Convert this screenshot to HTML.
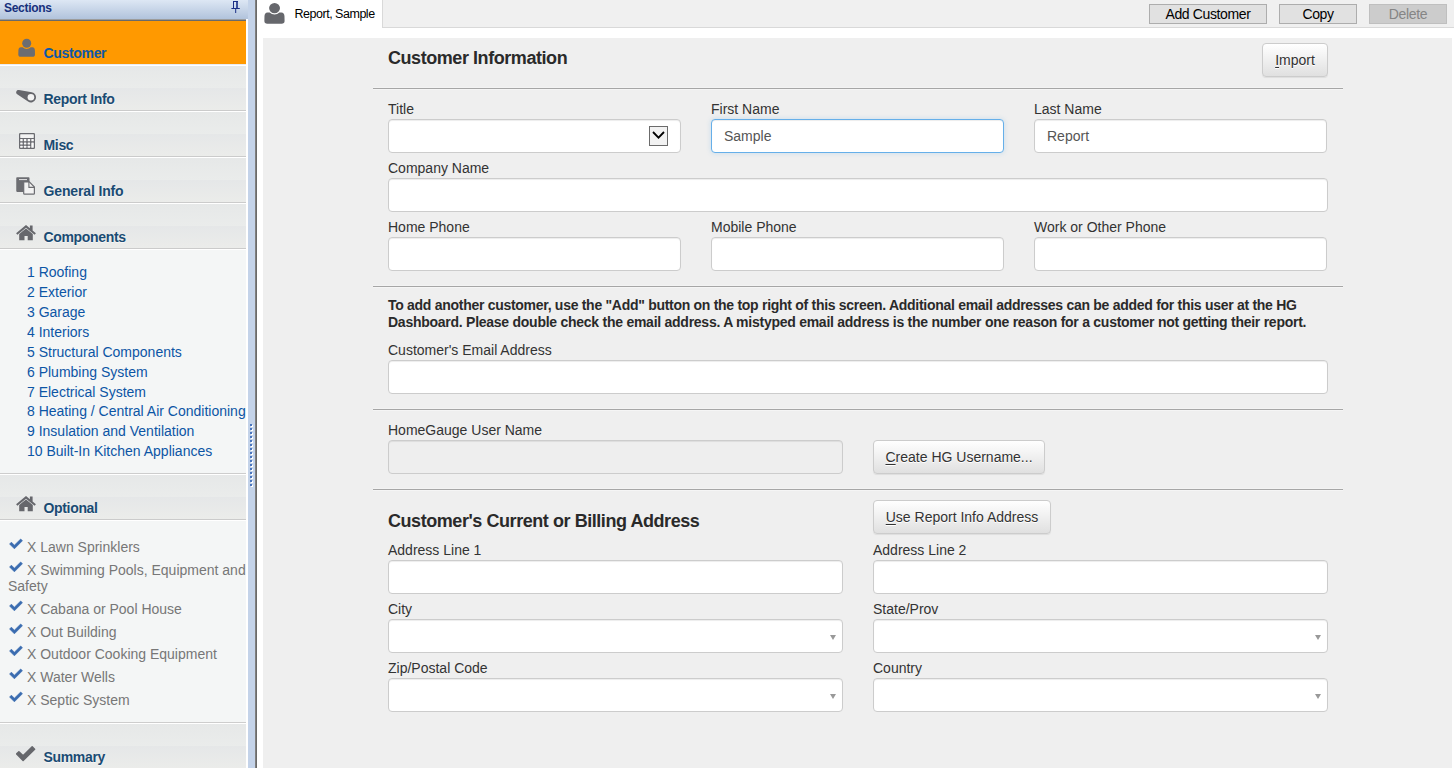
<!DOCTYPE html>
<html lang="en">
<head>
<meta charset="utf-8">
<title>Customer Information</title>
<style>
html,body{margin:0;padding:0}
body{width:1454px;height:768px;overflow:hidden;background:#fff;position:relative;font-family:"Liberation Sans",Arial,sans-serif;font-size:14px;color:#333}
.abs{position:absolute}
/* ---------- sidebar ---------- */
#side{position:absolute;left:0;top:0;width:248px;height:768px;overflow:hidden;background:linear-gradient(90deg,#f4f6f6 246px,#fff 246px)}
#shead{position:absolute;left:0;top:0;width:248px;height:19px;background:linear-gradient(#dde7f4,#b1c3dc);}
#shead .t{position:absolute;left:4px;top:1px;font-weight:bold;font-size:12px;line-height:15px;color:#16307c;letter-spacing:-0.3px}
#sline1{position:absolute;left:0;top:19px;width:246px;height:1px;background:#9c9c9c}
#sline2{position:absolute;left:0;top:20px;width:246px;height:1px;background:#6a6a6a}
.item{position:absolute;left:0;width:246px;height:44px;border-bottom:1px solid #cbcbcb;
 background:linear-gradient(#e6e8e8 0,#eaeceb 50%,#e5e7e8 50%,#ebecea 100%);}
.item .lbl{position:absolute;left:43.5px;font-weight:bold;font-size:14px;letter-spacing:-0.33px;line-height:16px;color:#1a4b73;white-space:nowrap;text-shadow:0 1px 0 #f6f6f6}
.item.sel{background:#ff9900;border-bottom-color:#e9ebf2}
.item.sel .lbl{color:#0e58a6;text-shadow:none}
.item svg{position:absolute}
.white1{position:absolute;left:0;width:246px;height:1px;background:#fff}
.comp{position:absolute;left:27px;font-size:14px;line-height:20px;color:#0c55a5;white-space:nowrap}
.opt{position:absolute;left:8px;font-size:14px;line-height:16px;color:#777;white-space:nowrap}
.opt svg{position:absolute;left:1px;top:-1px}
.opt span{padding-left:19px}
/* splitter */
#split{position:absolute;left:248px;top:0;width:7px;height:768px;background:#c4d3e9}
#splitd{position:absolute;left:255px;top:0;width:2px;height:768px;background:linear-gradient(90deg,#8a8a8a,#5f5f5f)}
/* ---------- main ---------- */
#topbar{position:absolute;left:382px;top:0;width:1072px;height:27px;background:#f0f0f0;border-bottom:1px solid #d9d9d9;border-left:1px solid #d9d9d9}
#tab{position:absolute;left:257px;top:0;width:125px;height:28px;background:#fff}
#tab .t{position:absolute;left:37.500px;top:7px;font-size:12.5px;letter-spacing:-0.48px;line-height:15px;color:#000;white-space:nowrap}
.wbtn{position:absolute;top:4px;height:18px;border:1px solid #adadad;background:#e1e1e1;color:#000;font-size:14px;letter-spacing:-0.36px;line-height:19px;text-align:center}
.wbtn.dis{background:#cccccc;border-color:#bfbfbf;color:#858585}
#panel{position:absolute;left:263px;top:38px;width:1189px;height:730px;background:#efefef}
.hr{position:absolute;left:373px;width:970px;height:1px;background:#a6a6a6;border-bottom:1px solid #f5f5f5;border-top:1px solid #f3f3f3;margin-top:-1px}
h1,h2{margin:0}
.h{position:absolute;left:388px;font-size:18px;letter-spacing:-0.44px;font-weight:bold;line-height:20px;color:#2a2a2a;white-space:nowrap}
.l{position:absolute;font-size:14px;line-height:20px;color:#333;white-space:nowrap}
.in{position:absolute;box-sizing:border-box;height:34px;border:1px solid #ccc;border-radius:4px;background:#fff;box-shadow:inset 0 1px 1px rgba(0,0,0,.075);font-size:14px;line-height:32px;color:#555;padding-left:12px}
.in.focus{border-color:#66afe9;box-shadow:inset 0 1px 1px rgba(0,0,0,.075),0 0 5px rgba(102,175,233,.3)}
.in.dis{background:#eeeeee}
.btn{position:absolute;box-sizing:border-box;height:34px;border:1px solid #ccc;border-radius:4px;background:linear-gradient(#fff,#e0e0e0);font-size:14px;line-height:32px;color:#333;text-align:center;text-shadow:0 1px 0 #fff;box-shadow:inset 0 1px 0 rgba(255,255,255,.15),0 1px 1px rgba(0,0,0,.075);white-space:nowrap}
.btn u{text-decoration:underline;text-underline-offset:2px}
.tri{position:absolute;width:0;height:0;border-left:3.5px solid transparent;border-right:3.5px solid transparent;border-top:5px solid #999}
.note{position:absolute;left:388px;top:297px;width:960px;font-size:14px;letter-spacing:-0.285px;font-weight:bold;line-height:17px;color:#2a2a2a}
</style>
</head>
<body>

<!-- ================= SIDEBAR ================= -->
<div id="side">
  <div id="shead"><div class="t">Sections</div></div>
  <div id="sline1"></div><div id="sline2"></div>

  <div class="item sel" style="top:21px;height:43px">
    <svg style="left:18px;top:17px" width="18" height="19" viewBox="0 0 18 19"><circle cx="8.7" cy="5.300" r="4.500" fill="#6c6d72"/><path d="M2.900 9.200H4.680A5.600 5.600 0 0 0 12.720 9.200H14.400C16 9.200 16.700 10.300 16.900 12.200L17 16.400C17 17.900 16.100 18.800 14.600 18.800H2.700C1.200 18.800.3 17.900.3 16.400L.4 12.200C.6 10.300 1.300 9.200 2.900 9.200z" fill="#6c6d72"/></svg>
    <div class="lbl" style="top:24px">Customer</div>
  </div>
  <div class="white1" style="top:65px"></div>

  <div class="item" style="top:66px">
    <svg style="left:16px;top:23px" width="21" height="15" viewBox="0 0 21 15"><path d="M2.890 1.030L15.770 3.280A5.100 5.100 0 1 1 12.040 12.530L1.210 5.210A2.300 2.300 0 0 1 2.890 1.030z" fill="#66676c"/><circle cx="14.900" cy="8.300" r="3.300" fill="#f3f3f3"/></svg>
    <div class="lbl" style="top:25px">Report Info</div>
  </div>
  <div class="white1" style="top:111px"></div>

  <div class="item" style="top:112px">
    <svg style="left:19px;top:21px" width="16" height="16" viewBox="0 0 16 16"><rect x="0" y="0" width="16" height="16" rx="1.200" fill="#6a6b70"/><rect x="1.200" y="1.300" width="13.600" height="3.600" rx=".4" fill="#f3f3f3"/><g fill="#fafafa"><rect x="1.200" y="6.100" width="2.500" height="2.100" rx=".5"/><rect x="4.900" y="6.100" width="2.500" height="2.100" rx=".5"/><rect x="8.600" y="6.100" width="2.500" height="2.100" rx=".5"/><rect x="12.300" y="6.100" width="2.500" height="2.100" rx=".5"/><rect x="1.200" y="9.400" width="2.500" height="2.100" rx=".5"/><rect x="4.900" y="9.400" width="2.500" height="2.100" rx=".5"/><rect x="8.600" y="9.400" width="2.500" height="2.100" rx=".5"/><rect x="1.200" y="12.700" width="2.500" height="2.100" rx=".5"/><rect x="4.900" y="12.700" width="2.500" height="2.100" rx=".5"/><rect x="8.600" y="12.700" width="2.500" height="2.100" rx=".5"/><rect x="12.300" y="9.400" width="2.500" height="5.400" rx=".6"/></g></svg>
    <div class="lbl" style="top:25px">Misc</div>
  </div>
  <div class="white1" style="top:157px"></div>

  <div class="item" style="top:158px">
    <svg style="left:16px;top:19px" width="20" height="18" viewBox="0 0 20 18"><path d="M.25 1c0-.5.3-.8.800-.8h11.650c.5 0 .8.300.8.800v13.100c0 .5-.3.800-.8.800H1.050c-.5 0-.8-.3-.8-.8z" fill="#6c6d72"/><path d="M3 2.600h8" stroke="#e6e6e6" stroke-width="1"/><path d="M7.700 4.900H13.300L18.400 10V16.400Q18.400 17.200 17.600 17.200H8.500Q7.700 17.200 7.700 16.400z" fill="#f2f2f2" stroke="#6c6d72" stroke-width="1.200"/><path d="M12.900 4.900V10.400H18.400" fill="none" stroke="#6c6d72" stroke-width="1.100"/></svg>
    <div class="lbl" style="top:25px;letter-spacing:-0.14px">General Info</div>
  </div>
  <div class="white1" style="top:203px"></div>

  <div class="item" style="top:204px">
    <svg style="left:16px;top:21px" width="20" height="16" viewBox="0 0 20 16"><path d="M10 0L.1 8.200l1.300 1.500L10 2.700l8.600 7 1.300-1.500-3.300-2.700V.4h-2.700v2.800z" fill="#66676c"/><path d="M10 3.500L3.200 9.100v6.200h5.300v-4.400h3.200v4.400h5.100V9.100z" fill="#66676c"/></svg>
    <div class="lbl" style="top:25px">Components</div>
  </div>
  <div class="white1" style="top:249px"></div>

  <div class="comp" style="top:262px">1 Roofing</div>
  <div class="comp" style="top:282px">2 Exterior</div>
  <div class="comp" style="top:302px">3 Garage</div>
  <div class="comp" style="top:322px">4 Interiors</div>
  <div class="comp" style="top:342px">5 Structural Components</div>
  <div class="comp" style="top:362px">6 Plumbing System</div>
  <div class="comp" style="top:382px">7 Electrical System</div>
  <div class="comp" style="top:401px">8 Heating / Central Air Conditioning</div>
  <div class="comp" style="top:421px">9 Insulation and Ventilation</div>
  <div class="comp" style="top:441px">10 Built-In Kitchen Appliances</div>

  <div class="white1" style="top:473px;background:#cdcdcd"></div>
  <div class="white1" style="top:474px"></div>
  <div class="item" style="top:475px">
    <svg style="left:16px;top:21px" width="20" height="16" viewBox="0 0 20 16"><path d="M10 0L.1 8.200l1.300 1.500L10 2.700l8.600 7 1.300-1.500-3.300-2.700V.4h-2.700v2.800z" fill="#66676c"/><path d="M10 3.500L3.200 9.100v6.200h5.300v-4.400h3.200v4.400h5.100V9.100z" fill="#66676c"/></svg>
    <div class="lbl" style="top:25px">Optional</div>
  </div>
  <div class="white1" style="top:520px"></div>

  <div class="opt" style="top:539px"><svg width="14" height="12" viewBox="0 0 14 12"><path d="M.6 6L2.400 4.200l3 3L11.700 1l1.700 1.800L5.400 10.800z" fill="#3a6cb0" stroke="#3a6cb0" stroke-width=".7" stroke-linejoin="round"/></svg><span>X Lawn Sprinklers</span></div>
  <div class="opt" style="top:562px"><svg width="14" height="12" viewBox="0 0 14 12"><path d="M.6 6L2.400 4.200l3 3L11.700 1l1.700 1.800L5.400 10.800z" fill="#3a6cb0" stroke="#3a6cb0" stroke-width=".7" stroke-linejoin="round"/></svg><span>X Swimming Pools, Equipment and</span><br>Safety</div>
  <div class="opt" style="top:601px"><svg width="14" height="12" viewBox="0 0 14 12"><path d="M.6 6L2.400 4.200l3 3L11.700 1l1.700 1.800L5.400 10.800z" fill="#3a6cb0" stroke="#3a6cb0" stroke-width=".7" stroke-linejoin="round"/></svg><span>X Cabana or Pool House</span></div>
  <div class="opt" style="top:624px"><svg width="14" height="12" viewBox="0 0 14 12"><path d="M.6 6L2.400 4.200l3 3L11.700 1l1.700 1.800L5.400 10.800z" fill="#3a6cb0" stroke="#3a6cb0" stroke-width=".7" stroke-linejoin="round"/></svg><span>X Out Building</span></div>
  <div class="opt" style="top:646px"><svg width="14" height="12" viewBox="0 0 14 12"><path d="M.6 6L2.400 4.200l3 3L11.700 1l1.700 1.800L5.400 10.800z" fill="#3a6cb0" stroke="#3a6cb0" stroke-width=".7" stroke-linejoin="round"/></svg><span>X Outdoor Cooking Equipment</span></div>
  <div class="opt" style="top:669px"><svg width="14" height="12" viewBox="0 0 14 12"><path d="M.6 6L2.400 4.200l3 3L11.700 1l1.700 1.800L5.400 10.800z" fill="#3a6cb0" stroke="#3a6cb0" stroke-width=".7" stroke-linejoin="round"/></svg><span>X Water Wells</span></div>
  <div class="opt" style="top:692px"><svg width="14" height="12" viewBox="0 0 14 12"><path d="M.6 6L2.400 4.200l3 3L11.700 1l1.700 1.800L5.400 10.800z" fill="#3a6cb0" stroke="#3a6cb0" stroke-width=".7" stroke-linejoin="round"/></svg><span>X Septic System</span></div>

  <div class="white1" style="top:722px;background:#cdcdcd"></div>
  <div class="white1" style="top:723px"></div>
  <div class="item" style="top:724px">
    <svg style="left:16px;top:22px" width="20" height="16" viewBox="0 0 20 16"><path d="M.7 7.900L2.900 5.700l4.200 4.100L16.200.9l2.400 2.300L7.100 14.400z" fill="#66676c" stroke="#66676c" stroke-width="1.500" stroke-linejoin="round"/></svg>
    <div class="lbl" style="top:25px">Summary</div>
  </div>
</div>

<div id="shpin" class="abs" style="left:231px;top:1px;width:10px;height:13px">
  <svg width="10" height="13" viewBox="0 0 10 13"><path d="M2 .5h5M2.500 .5v7M.4 7.500h8.400M4.700 7.500v4.500" stroke="#1a2f86" stroke-width="1" fill="none"/><rect x="5.200" y="0" width="1.600" height="8" fill="#1a2f86"/></svg>
</div>
<div id="split"></div>
<div id="splitd"></div>
<svg class="abs" style="left:250px;top:424px" width="4" height="64" viewBox="0 0 4 64">
  <g fill="#fff"><rect x="1" y="1" width="2" height="2"/><rect x="1" y="5" width="2" height="2"/><rect x="1" y="9" width="2" height="2"/><rect x="1" y="13" width="2" height="2"/><rect x="1" y="17" width="2" height="2"/><rect x="1" y="21" width="2" height="2"/><rect x="1" y="25" width="2" height="2"/><rect x="1" y="29" width="2" height="2"/><rect x="1" y="33" width="2" height="2"/><rect x="1" y="37" width="2" height="2"/><rect x="1" y="41" width="2" height="2"/><rect x="1" y="45" width="2" height="2"/><rect x="1" y="49" width="2" height="2"/><rect x="1" y="53" width="2" height="2"/><rect x="1" y="57" width="2" height="2"/><rect x="1" y="61" width="2" height="2"/></g>
  <g fill="#4a76bf"><rect x="0" y="0" width="2" height="2"/><rect x="0" y="4" width="2" height="2"/><rect x="0" y="8" width="2" height="2"/><rect x="0" y="12" width="2" height="2"/><rect x="0" y="16" width="2" height="2"/><rect x="0" y="20" width="2" height="2"/><rect x="0" y="24" width="2" height="2"/><rect x="0" y="28" width="2" height="2"/><rect x="0" y="32" width="2" height="2"/><rect x="0" y="36" width="2" height="2"/><rect x="0" y="40" width="2" height="2"/><rect x="0" y="44" width="2" height="2"/><rect x="0" y="48" width="2" height="2"/><rect x="0" y="52" width="2" height="2"/><rect x="0" y="56" width="2" height="2"/><rect x="0" y="60" width="2" height="2"/></g>
</svg>

<!-- ================= TOP BAR ================= -->
<div id="topbar"></div>
<div id="tab">
  <svg class="abs" style="left:6.900px;top:2.100px" width="21.800" height="21.950" viewBox="0 0 18 19" preserveAspectRatio="none"><circle cx="8.7" cy="5.300" r="4.500" fill="#66676c"/><path d="M2.900 9.200H4.680A5.600 5.600 0 0 0 12.720 9.200H14.400C16 9.200 16.700 10.300 16.900 12.200L17 16.400C17 17.900 16.100 18.800 14.600 18.800H2.700C1.200 18.800.3 17.900.3 16.400L.4 12.200C.6 10.300 1.300 9.200 2.900 9.200z" fill="#66676c"/></svg>
  <div class="t">Report, Sample</div>
</div>
<div class="wbtn" style="left:1149px;width:116px">Add Customer</div>
<div class="wbtn" style="left:1279px;width:76px">Copy</div>
<div class="wbtn dis" style="left:1369px;width:76px">Delete</div>

<!-- ================= MAIN PANEL ================= -->
<div id="panel"></div>

<h1 class="h" style="top:48px">Customer Information</h1>
<div class="btn" style="left:1262px;top:43px;width:66px"><u>I</u>mport</div>
<div class="hr" style="top:88px"></div>

<div class="l" style="left:388px;top:99px">Title</div>
<div class="in" style="left:388px;top:119px;width:293px"></div>
<div class="abs" style="left:649px;top:126px;width:17px;height:18px;border:1px solid #6b6b6b;background:#f2f2f2">
  <svg class="abs" style="left:2px;top:3px" width="13" height="10" viewBox="0 0 13 10"><path d="M1 2l5.500 5.600L12 2" fill="none" stroke="#000" stroke-width="1.800"/></svg>
</div>
<div class="l" style="left:711px;top:99px">First Name</div>
<div class="in focus" style="left:711px;top:119px;width:293px">Sample</div>
<div class="l" style="left:1034px;top:99px">Last Name</div>
<div class="in" style="left:1034px;top:119px;width:293px">Report</div>

<div class="l" style="left:388px;top:158px">Company Name</div>
<div class="in" style="left:388px;top:178px;width:940px"></div>

<div class="l" style="left:388px;top:217px">Home Phone</div>
<div class="in" style="left:388px;top:237px;width:293px"></div>
<div class="l" style="left:711px;top:217px">Mobile Phone</div>
<div class="in" style="left:711px;top:237px;width:293px"></div>
<div class="l" style="left:1034px;top:217px">Work or Other Phone</div>
<div class="in" style="left:1034px;top:237px;width:293px"></div>

<div class="hr" style="top:286px"></div>
<div class="note">To add another customer, use the "Add" button on the top right of this screen. Additional email addresses can be added for this user at the HG<br><span style="letter-spacing:-0.258px">Dashboard. Please double check the email address. A mistyped email address is the number one reason for a customer not getting their report.</span></div>

<div class="l" style="left:388px;top:340px">Customer's Email Address</div>
<div class="in" style="left:388px;top:360px;width:940px"></div>

<div class="hr" style="top:409px"></div>
<div class="l" style="left:388px;top:420px">HomeGauge User Name</div>
<div class="in dis" style="left:388px;top:440px;width:455px"></div>
<div class="btn" style="left:873px;top:440px;width:172px"><u>C</u>reate HG Username...</div>

<div class="hr" style="top:489px"></div>
<h2 class="h" style="top:511px">Customer's Current or Billing Address</h2>
<div class="btn" style="left:873px;top:500px;width:178px"><u>U</u>se Report Info Address</div>

<div class="l" style="left:388px;top:540px">Address Line 1</div>
<div class="in" style="left:388px;top:560px;width:455px"></div>
<div class="l" style="left:873px;top:540px">Address Line 2</div>
<div class="in" style="left:873px;top:560px;width:455px"></div>

<div class="l" style="left:388px;top:599px">City</div>
<div class="in" style="left:388px;top:619px;width:455px"></div>
<div class="tri" style="left:829.5px;top:635px"></div>
<div class="l" style="left:873px;top:599px">State/Prov</div>
<div class="in" style="left:873px;top:619px;width:455px"></div>
<div class="tri" style="left:1314.5px;top:635px"></div>

<div class="l" style="left:388px;top:658px">Zip/Postal Code</div>
<div class="in" style="left:388px;top:678px;width:455px"></div>
<div class="tri" style="left:829.5px;top:694px"></div>
<div class="l" style="left:873px;top:658px">Country</div>
<div class="in" style="left:873px;top:678px;width:455px"></div>
<div class="tri" style="left:1314.5px;top:694px"></div>

</body>
</html>
